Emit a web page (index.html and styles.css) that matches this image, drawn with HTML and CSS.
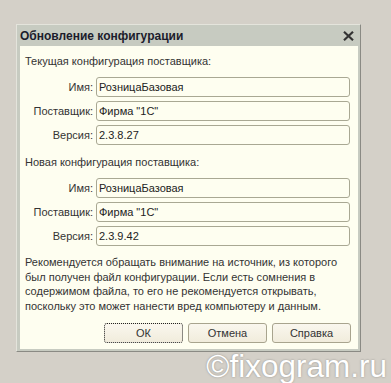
FILE: index.html
```html
<!DOCTYPE html>
<html lang="ru">
<head>
<meta charset="utf-8">
<title>Обновление конфигурации</title>
<link rel="stylesheet" href="styles.css">
</head>
<body>
<div class="page">
  <div class="window">
    <div class="titlebar">
      <span class="title">Обновление конфигурации</span>
      <svg class="close" width="11" height="10" viewBox="0 0 11 10"><path d="M1 0.8 L10 9.2 M10 0.8 L1 9.2" stroke="#333" stroke-width="2.2" fill="none"/></svg>
    </div>
    <div class="content">
      <div class="heading">Текущая конфигурация поставщика:</div>
      <div class="rows">
        <div class="label">Имя:</div><div class="field">РозницаБазовая</div>
        <div class="label">Поставщик:</div><div class="field">Фирма "1С"</div>
        <div class="label">Версия:</div><div class="field">2.3.8.27</div>
      </div>
      <div class="heading second">Новая конфигурация поставщика:</div>
      <div class="rows">
        <div class="label">Имя:</div><div class="field">РозницаБазовая</div>
        <div class="label">Поставщик:</div><div class="field">Фирма "1С"</div>
        <div class="label">Версия:</div><div class="field">2.3.9.42</div>
      </div>
      <p class="note">Рекомендуется обращать внимание на источник, из которого<br>был получен файл конфигурации. Если есть сомнения в<br>содержимом файла, то его не рекомендуется открывать,<br>поскольку это может нанести вред компьютеру и данным.</p>
      <div class="buttons">
        <div class="btn focus">ОК</div>
        <div class="btn">Отмена</div>
        <div class="btn">Справка</div>
      </div>
    </div>
  </div>
</div>
<div class="watermark">©fixogram.ru</div>
</body>
</html>
```
FILE: styles.css
```css
html, body {
  margin: 0;
}
body {
  background: #d4d0c8;
  font-family: "Liberation Sans", Arial, sans-serif;
  font-size: 11px;
  color: #333;
  height: 383px;
  overflow: hidden;
  position: relative;
}
.page {
  padding: 24px 0 0 16px;
}
.window {
  width: 345px;
  box-sizing: border-box;
  border-top: 1px solid #e4e4dc;
  border-left: 1px solid #e4e4dc;
  border-right: 1px solid #8a8a84;
  border-bottom: 1px solid #8a8a84;
  background: #c7cbc1;
  padding: 0 2px 2px 3px;
}
.titlebar {
  height: 21px;
  display: flex;
  align-items: center;
  justify-content: space-between;
  padding: 0 4px 0 0;
}
.title {
  font-weight: bold;
  color: #1c1c2c;
  font-size: 12px;
}
.close {
  display: block;
}
.content {
  background: #fefef0;
  height: 303px;
  box-sizing: border-box;
  padding: 9px 8px 0 5px;
}
.heading {
  line-height: 13px;
  margin-bottom: 9px;
}
.heading.second {
  margin-top: 11px;
}
.rows {
  display: grid;
  grid-template-columns: 68px 1fr;
  column-gap: 3px;
  row-gap: 4px;
}
.label {
  text-align: right;
  line-height: 20px;
  height: 20px;
}
.field {
  height: 20px;
  box-sizing: border-box;
  border: 1px solid #a9a893;
  border-radius: 3px;
  padding: 0 2px;
  line-height: 18px;
  color: #222;
  background: #fefef0;
}
.note {
  margin: 9px 0 0 0;
  line-height: 14.5px;
  white-space: nowrap;
}
.buttons {
  display: flex;
  justify-content: flex-end;
  gap: 5px;
  margin-top: 10px;
  margin-right: -1px;
}
.btn {
  width: 79px;
  height: 20px;
  box-sizing: border-box;
  border: 1px solid #a8a48e;
  border-radius: 3px;
  background: linear-gradient(#faf7ee, #f1ecdc);
  text-align: center;
  line-height: 18px;
  color: #333;
}
.btn.focus {
  border: 1px dotted #222;
}
.watermark {
  position: absolute;
  right: 4px;
  top: 348px;
  font-family: "Liberation Sans", Arial, sans-serif;
  font-size: 31.5px;
  line-height: 36px;
  color: #ffffff;
  text-shadow: 0 0 2px rgba(90, 90, 90, 0.6);
}
```
